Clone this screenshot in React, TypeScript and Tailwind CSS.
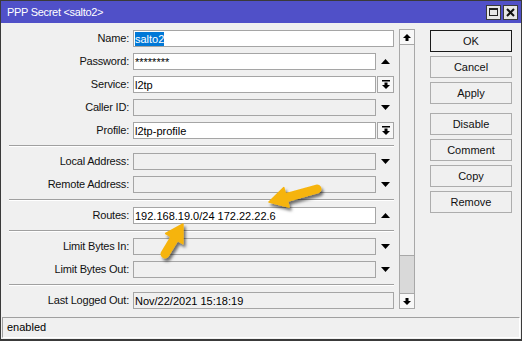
import React from "react";

type Kind = "full" | "up" | "down" | "drop";
type Field = { label: string; value?: string; white?: boolean; kind: Kind; sel?: boolean };
type Row = Field | "sep";

// form rows, top to bottom
const ROWS: Row[] = [
  { label: "Name:", value: "salto2", white: true, kind: "full", sel: true },
  { label: "Password:", value: "********", white: true, kind: "up" },
  { label: "Service:", value: "l2tp", white: true, kind: "drop" },
  { label: "Caller ID:", kind: "down" },
  { label: "Profile:", value: "l2tp-profile", white: true, kind: "drop" },
  "sep",
  { label: "Local Address:", kind: "down" },
  { label: "Remote Address:", kind: "down" },
  "sep",
  { label: "Routes:", value: "192.168.19.0/24 172.22.22.6", white: true, kind: "up" },
  "sep",
  { label: "Limit Bytes In:", kind: "down" },
  { label: "Limit Bytes Out:", kind: "down" },
  "sep",
  { label: "Last Logged Out:", value: "Nov/22/2021 15:18:19", kind: "full" },
];

const BUTTONS = [
  ["OK", "Cancel", "Apply"],
  ["Disable", "Comment", "Copy", "Remove"],
];

function Tri({ up }: { up?: boolean }) {
  return (
    <svg width="9" height="5" viewBox="0 0 9 5">
      <path d={up ? "M0 5L4.5 0L9 5Z" : "M0 0L9 0L4.5 5Z"} fill="#000" />
    </svg>
  );
}

function StemArrow({ up }: { up?: boolean }) {
  return (
    <svg width="8" height="7" viewBox="0 0 8 7">
      {up ? (
        <path d="M0 4L4 0L8 4H5.5V7H2.5V4Z" fill="#000" />
      ) : (
        <path d="M0 3L4 7L8 3H5.5V0H2.5V3Z" fill="#000" />
      )}
    </svg>
  );
}

function DropIcon() {
  return (
    <svg width="8" height="9" viewBox="0 0 8 9">
      <rect x="0" y="0" width="8" height="1.5" fill="#000" />
      <path d="M0 5L4 9L8 5H5.5V2.5H2.5V5Z" fill="#000" />
    </svg>
  );
}

function FieldRow({ f }: { f: Field }) {
  const box = `h-[17px] border border-[#a5a5a5] flex items-center pl-[1px] overflow-hidden ${
    f.white ? "bg-white" : "bg-[#f0f0f0]"
  } ${f.kind === "full" ? "w-[261px]" : "w-[243px]"}`;
  return (
    <div className="flex items-center h-[17px]">
      <div className="w-[128px] text-right text-[11px] leading-none text-[#111] tracking-[-0.2px]">{f.label}</div>
      <div className={`ml-[4px] ${box}`}>
        {f.value && (
          <span
            className={`text-[11px] leading-[14px] px-[0px] whitespace-nowrap ${
              f.sel ? "bg-[#0078d7] text-white" : "text-black"
            }`}
          >
            {f.value}
          </span>
        )}
      </div>
      {f.kind === "up" && (
        <div className="ml-[1px] w-[17px] flex justify-center">
          <Tri up />
        </div>
      )}
      {f.kind === "down" && (
        <div className="ml-[1px] w-[17px] flex justify-center">
          <Tri />
        </div>
      )}
      {f.kind === "drop" && (
        <div className="ml-[1px] w-[17px] h-[17px] border border-[#a5a5a5] bg-[#f7f7f7] flex items-center justify-center">
          <DropIcon />
        </div>
      )}
    </div>
  );
}

function Arrows() {
  return (
    <svg className="absolute inset-0 pointer-events-none" width="522" height="341" viewBox="0 0 522 341">
      <defs>
        <filter id="sh" x="-50%" y="-50%" width="200%" height="200%">
          <feDropShadow dx="2" dy="3" stdDeviation="1.8" floodColor="#000" floodOpacity="0.55" />
        </filter>
      </defs>
      <g filter="url(#sh)" fill="#f6b40e" stroke="#f6b40e">
        <line x1="316" y1="188" x2="286" y2="196.3" strokeWidth="9" strokeLinecap="round" />
        <path d="M268 201L288 206L282.8 186.6Z" strokeWidth="1.5" strokeLinejoin="round" />
        <line x1="164" y1="253" x2="173.3" y2="237.6" strokeWidth="9" strokeLinecap="round" />
        <path d="M182 223L181.9 242.7L164.7 232.5Z" strokeWidth="1.5" strokeLinejoin="round" />
      </g>
    </svg>
  );
}

export default function App() {
  return (
    <div className="relative w-[522px] h-[341px] flex flex-col bg-[#f0f0f0] border border-[#3a3a3a] border-b-[2px] font-['Liberation_Sans',Arial,sans-serif] overflow-hidden">
      {/* Title bar */}
      <div className="h-[22px] bg-[#5050c8] flex items-center pl-[6px] pr-[3px]">
        <span className="text-white text-[11px] tracking-[-0.3px] leading-none">PPP Secret &lt;salto2&gt;</span>
        <div className="ml-auto flex gap-[2px]">
          <div className="w-[15px] h-[15px] bg-[#e6e6e6] border border-[#3a3a3a] flex items-center justify-center">
            <div className="w-[9px] h-[8px] border border-[#222] border-t-[2px]" />
          </div>
          <div className="w-[15px] h-[15px] bg-[#e6e6e6] border border-[#3a3a3a] flex items-center justify-center">
            <svg width="9" height="9" viewBox="0 0 9 9">
              <path d="M1 1L8 8M8 1L1 8" stroke="#111" strokeWidth="2" />
            </svg>
          </div>
        </div>
      </div>

      {/* Body */}
      <div className="flex-1 flex pt-[6px]">
        <div className="flex flex-col gap-[6px] pt-[1px]">
          {ROWS.map((r, i) =>
            r === "sep" ? (
              <div key={i} className="ml-[8px] w-[385px] h-[2px] border-t border-[#a0a0a0] border-b border-b-white" />
            ) : (
              <FieldRow key={i} f={r} />
            )
          )}
        </div>

        {/* Scrollbar */}
        <div className="ml-[5px] w-[16px] h-[280px] flex flex-col border border-[#a8a8a8] bg-[#d9d9d9]">
          <div className="h-[15px] bg-[#f8f8f8] border-b border-[#a8a8a8] flex items-center justify-center">
            <StemArrow up />
          </div>
          <div className="h-[211px] bg-[#f0f0f0] border-b border-[#a8a8a8]" />
          <div className="flex-1" />
          <div className="h-[15px] bg-[#f8f8f8] border-t border-[#a8a8a8] flex items-center justify-center">
            <StemArrow />
          </div>
        </div>

        {/* Buttons */}
        <div className="ml-[15px] flex flex-col pt-[1px] gap-[9px]">
          {BUTTONS.map((grp, gi) => (
            <div key={gi} className="flex flex-col gap-[4px]">
              {grp.map((b) => (
                <div
                  key={b}
                  className={`w-[82px] h-[22px] border flex items-center justify-center text-[11px] text-[#111] bg-[#f0f0f0] ${
                    b === "OK" ? "border-[#1a1a1a]" : "border-[#adadad]"
                  }`}
                >
                  {b}
                </div>
              ))}
            </div>
          ))}
        </div>
      </div>

      {/* Status bar */}
      <div className="mx-[1px] mb-[1px] h-[21px] border-t border-l border-[#a0a0a0] border-b border-r border-b-white border-r-white flex items-center pl-[4px] text-[11px] text-black">
        enabled
      </div>

      <Arrows />
    </div>
  );
}
